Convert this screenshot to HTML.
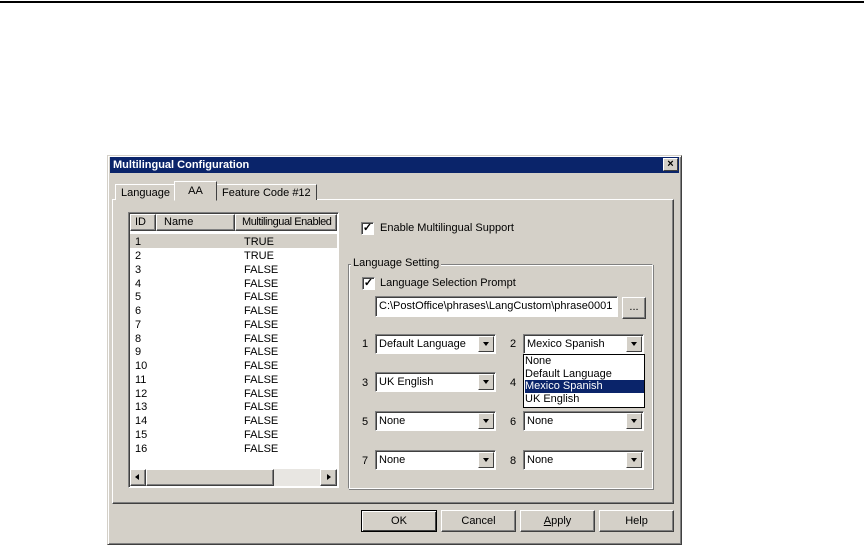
<!DOCTYPE html>
<html><head><meta charset="utf-8"><style>
*{margin:0;padding:0;box-sizing:border-box}
html,body{width:864px;height:541px}
body{background:#fff;position:relative;overflow:hidden;font-family:"Liberation Sans",sans-serif;font-size:11px;color:#000}
.a{position:absolute}
.dlg{left:107px;top:155px;width:575px;height:390px;background:#d4d0c8;border:1px solid;border-color:#d4d0c8 #404040 #404040 #d4d0c8;box-shadow:inset 1px 1px #fff,inset -1px -1px #808080}
.title{left:110px;top:157px;width:569px;height:16px;background:#0a246a;color:#fff;font-weight:bold;font-size:11px;line-height:16px;padding-left:3px}
.x{left:663px;top:158px;width:15px;height:13px;background:#d4d0c8;border:1px solid;border-color:#fff #404040 #404040 #fff;font-size:11px;line-height:11px;text-align:center;font-weight:bold;color:#000}
.raised{border:1px solid;border-color:#fff #404040 #404040 #fff;box-shadow:inset -1px -1px #808080}
.sunk{border:1px solid;border-color:#808080 #fff #fff #808080;box-shadow:inset 1px 1px #404040}
.white{background:#fff}
.tab{top:182px;height:18px;line-height:16px;border:1px solid;border-bottom:none;border-color:#fff #404040 #404040 #fff;padding:0 5px;background:#d4d0c8}
.row{left:135px;width:200px;height:14px;line-height:14px}
.row span{position:absolute;left:109px}
.chk{width:13px;height:13px;background:#fff;border:1px solid;border-color:#808080 #fff #fff #808080;box-shadow:inset 1px 1px #404040;font-size:11px;line-height:10px;text-align:center;font-weight:bold}
.combo{width:121px;height:20px;background:#fff;line-height:18px;padding-left:3px}
.arr{position:absolute;right:1px;top:1px;width:16px;height:16px;background:#d4d0c8;border:1px solid;border-color:#fff #404040 #404040 #fff}
.arr:after{content:"";position:absolute;left:4px;top:5px;border-left:3.5px solid transparent;border-right:3.5px solid transparent;border-top:4px solid #000}
.btn{top:510px;height:22px;line-height:20px;text-align:center;background:#d4d0c8}
</style></head><body>
<div class="a" style="left:0;top:1px;width:864px;height:2px;background:#000"></div>
<div class="a dlg"></div>
<div class="a title">Multilingual Configuration</div>
<div class="a x">×</div>

<div class="a raised" style="left:112px;top:199px;width:562px;height:305px;background:#d4d0c8"></div>
<div class="a tab" style="left:115px;top:184px;height:16px">Language</div>
<div class="a tab" style="left:174px;top:181px;height:20px;width:43px;z-index:2;border-bottom:1px solid #d4d0c8;text-align:center;line-height:18px">AA</div>
<div class="a tab" style="left:216px;top:184px;height:16px">Feature Code #12</div>

<div class="a sunk white" style="left:128px;top:212px;width:211px;height:276px"></div>
<div class="a raised" style="left:130px;top:214px;width:26px;height:17px;background:#d4d0c8;line-height:15px;padding-left:4px">ID</div>
<div class="a raised" style="left:156px;top:214px;width:79px;height:17px;background:#d4d0c8;line-height:15px;padding-left:7px">Name</div>
<div class="a raised" style="left:235px;top:214px;width:102px;height:17px;background:#d4d0c8;line-height:15px;padding-left:6px;overflow:hidden;white-space:nowrap;letter-spacing:-0.45px">Multilingual Enabled</div>
<div class="a" style="left:130px;top:234px;width:207px;height:14px;background:#d4d0c8"></div>
<div class="a row" style="top:235px">1<span>TRUE</span></div>
<div class="a row" style="top:249px">2<span>TRUE</span></div>
<div class="a row" style="top:263px">3<span>FALSE</span></div>
<div class="a row" style="top:277px">4<span>FALSE</span></div>
<div class="a row" style="top:290px">5<span>FALSE</span></div>
<div class="a row" style="top:304px">6<span>FALSE</span></div>
<div class="a row" style="top:318px">7<span>FALSE</span></div>
<div class="a row" style="top:332px">8<span>FALSE</span></div>
<div class="a row" style="top:345px">9<span>FALSE</span></div>
<div class="a row" style="top:359px">10<span>FALSE</span></div>
<div class="a row" style="top:373px">11<span>FALSE</span></div>
<div class="a row" style="top:387px">12<span>FALSE</span></div>
<div class="a row" style="top:400px">13<span>FALSE</span></div>
<div class="a row" style="top:414px">14<span>FALSE</span></div>
<div class="a row" style="top:428px">15<span>FALSE</span></div>
<div class="a row" style="top:442px">16<span>FALSE</span></div>
<div class="a" style="left:130px;top:469px;width:207px;height:17px;background:#e8e6e2"></div>
<div class="a raised" style="left:130px;top:469px;width:16px;height:17px;background:#d4d0c8"></div>
<div class="a" style="left:135px;top:474px;border-top:3.5px solid transparent;border-bottom:3.5px solid transparent;border-right:4px solid #000"></div>
<div class="a raised" style="left:146px;top:469px;width:128px;height:17px;background:#d4d0c8"></div>
<div class="a raised" style="left:320px;top:469px;width:17px;height:17px;background:#d4d0c8"></div>
<div class="a" style="left:327px;top:474px;border-top:3.5px solid transparent;border-bottom:3.5px solid transparent;border-left:4px solid #000"></div>

<div class="a chk" style="left:361px;top:222px">✓</div>
<div class="a" style="left:380px;top:222px">Enable Multilingual Support</div>

<div class="a" style="left:348px;top:264px;width:305px;height:225px;border:1px solid;border-color:#808080 #fff #fff #808080;box-shadow:inset 1px 1px #fff,1px 1px #808080"></div>
<div class="a" style="left:351px;top:257px;background:#d4d0c8;padding:0 2px">Language Setting</div>
<div class="a chk" style="left:362px;top:277px">✓</div>
<div class="a" style="left:380px;top:277px">Language Selection Prompt</div>
<div class="a sunk white" style="left:375px;top:296px;width:243px;height:21px;line-height:18px;padding-left:3px;white-space:nowrap;overflow:hidden">C:\PostOffice\phrases\LangCustom\phrase0001</div>
<div class="a raised" style="left:622px;top:297px;width:24px;height:22px;background:#d4d0c8;text-align:center;line-height:18px">...</div>

<div class="a" style="left:362px;top:338px">1</div>
<div class="a sunk combo" style="left:375px;top:334px">Default Language<div class="arr"></div></div>
<div class="a" style="left:510px;top:338px">2</div>
<div class="a sunk combo" style="left:523px;top:334px">Mexico Spanish<div class="arr"></div></div>
<div class="a" style="left:523px;top:354px;width:122px;height:54px;background:#fff;border:1px solid #000;z-index:3;line-height:12.5px;padding-left:1px">
<div>None</div><div>Default Language</div><div style="background:#0a246a;color:#fff">Mexico Spanish</div><div>UK English</div></div>

<div class="a" style="left:362px;top:377px">3</div>
<div class="a sunk combo" style="left:375px;top:372px">UK English<div class="arr"></div></div>
<div class="a" style="left:510px;top:377px">4</div>

<div class="a" style="left:362px;top:416px">5</div>
<div class="a sunk combo" style="left:375px;top:411px">None<div class="arr"></div></div>
<div class="a" style="left:510px;top:416px">6</div>
<div class="a sunk combo" style="left:523px;top:411px">None<div class="arr"></div></div>

<div class="a" style="left:362px;top:455px">7</div>
<div class="a sunk combo" style="left:375px;top:450px">None<div class="arr"></div></div>
<div class="a" style="left:510px;top:455px">8</div>
<div class="a sunk combo" style="left:523px;top:450px">None<div class="arr"></div></div>

<div class="a btn" style="left:361px;width:76px;border:1px solid #000;box-shadow:inset 1px 1px #fff,inset -1px -1px #404040">OK</div>
<div class="a btn raised" style="left:441px;width:75px">Cancel</div>
<div class="a btn raised" style="left:520px;width:75px"><u>A</u>pply</div>
<div class="a btn raised" style="left:599px;width:75px">Help</div>
</body></html>
